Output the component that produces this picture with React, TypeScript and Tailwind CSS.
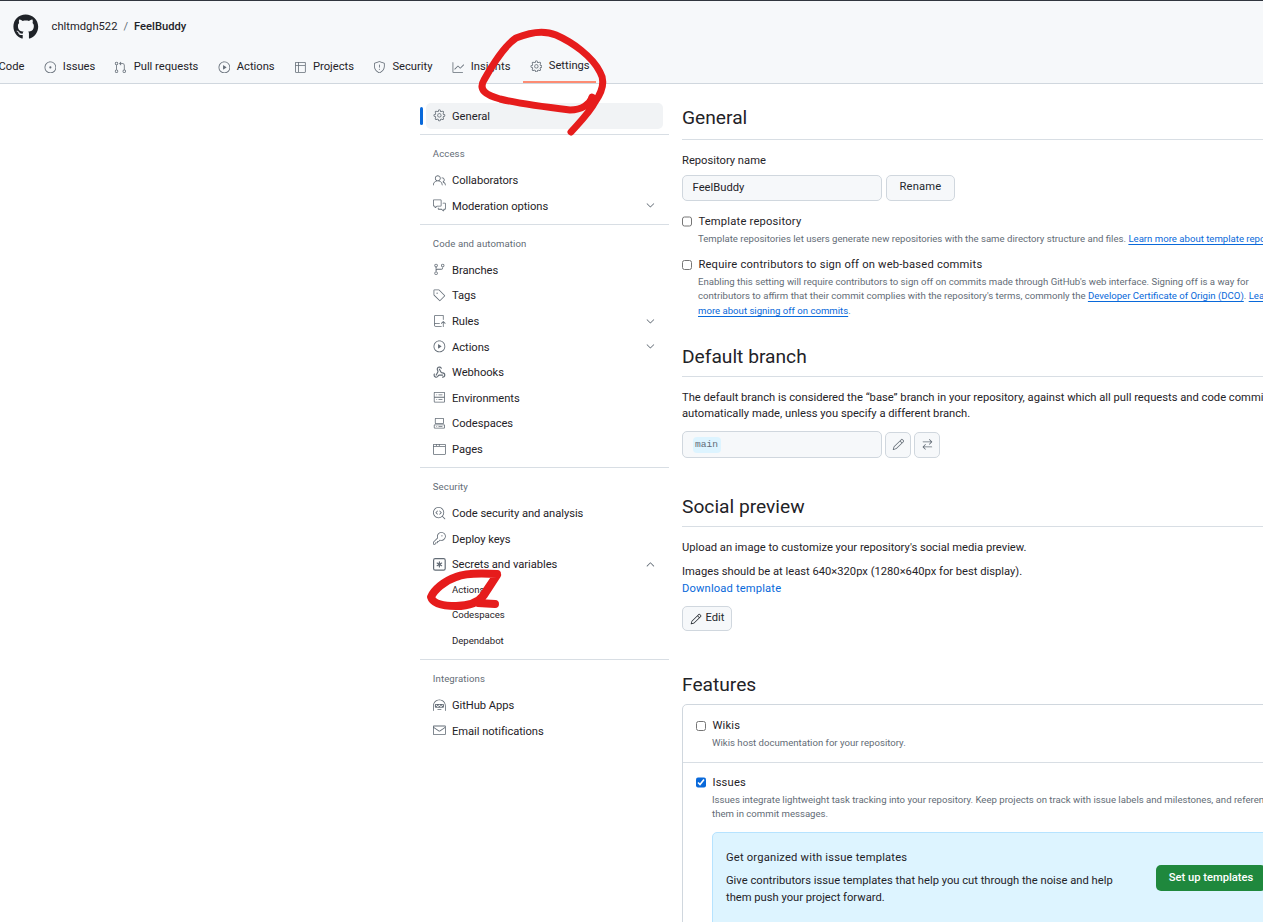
import React from 'react';
import type { ComponentType } from 'react';
import { Webhook } from 'lucide-react';
import { FaGithub } from 'react-icons/fa';
import {
  GoArrowSwitch, GoBrowser, GoChevronDown, GoChevronUp, GoCode, GoCodescan, GoCodespaces, GoCommentDiscussion,
  GoGear, GoGitBranch, GoGitPullRequest, GoGraph, GoHubot, GoIssueOpened, GoKey, GoMail,
  GoPencil, GoPeople, GoPlay, GoRepoPush, GoServer, GoShield, GoTable, GoTag,
} from 'react-icons/go';

type Icon = ComponentType<{ size?: number; className?: string }>;

function KeyAsterisk({ size }: { size?: number }) {
  return (
    <svg width={size} height={size} viewBox="0 0 16 16" fill="currentColor">
      <path d="M0 2.75A2.75 2.75 0 0 1 2.75 0h10.5A2.75 2.75 0 0 1 16 2.75v10.5A2.75 2.75 0 0 1 13.25 16H2.75A2.75 2.75 0 0 1 0 13.25ZM2.75 1.5c-.69 0-1.25.56-1.25 1.25v10.5c0 .69.56 1.25 1.25 1.25h10.5c.69 0 1.25-.56 1.25-1.25V2.75c0-.69-.56-1.25-1.25-1.25Z" />
      <path d="M8 4a.75.75 0 0 1 .75.75V6.7l1.69-.975a.75.75 0 0 1 .75 1.3L9.5 8l1.69.976a.75.75 0 0 1-.75 1.298L8.75 9.299v1.951a.75.75 0 0 1-1.5 0V9.299l-1.69.975a.75.75 0 0 1-.75-1.298L6.5 8l-1.69-.975a.75.75 0 0 1 .75-1.3l1.69.976V4.75A.75.75 0 0 1 8 4Z" />
    </svg>
  );
}

function WebhookIcon({ size }: { size?: number }) {
  return <Webhook size={size} strokeWidth={2.2} />;
}

const TABS: { label: string; icon: Icon }[] = [
  { label: 'Code', icon: GoCode },
  { label: 'Issues', icon: GoIssueOpened },
  { label: 'Pull requests', icon: GoGitPullRequest },
  { label: 'Actions', icon: GoPlay },
  { label: 'Projects', icon: GoTable },
  { label: 'Security', icon: GoShield },
  { label: 'Insights', icon: GoGraph },
  { label: 'Settings', icon: GoGear },
];

type NavItem = { label: string; icon?: Icon; chevron?: 'up' | 'down'; sub?: boolean };

const NAV: { title: string; items: NavItem[] }[] = [
  {
    title: 'Access',
    items: [
      { label: 'Collaborators', icon: GoPeople },
      { label: 'Moderation options', icon: GoCommentDiscussion, chevron: 'down' },
    ],
  },
  {
    title: 'Code and automation',
    items: [
      { label: 'Branches', icon: GoGitBranch },
      { label: 'Tags', icon: GoTag },
      { label: 'Rules', icon: GoRepoPush, chevron: 'down' },
      { label: 'Actions', icon: GoPlay, chevron: 'down' },
      { label: 'Webhooks', icon: WebhookIcon },
      { label: 'Environments', icon: GoServer },
      { label: 'Codespaces', icon: GoCodespaces },
      { label: 'Pages', icon: GoBrowser },
    ],
  },
  {
    title: 'Security',
    items: [
      { label: 'Code security and analysis', icon: GoCodescan },
      { label: 'Deploy keys', icon: GoKey },
      { label: 'Secrets and variables', icon: KeyAsterisk, chevron: 'up' },
      { label: 'Actions', sub: true },
      { label: 'Codespaces', sub: true },
      { label: 'Dependabot', sub: true },
    ],
  },
  {
    title: 'Integrations',
    items: [
      { label: 'GitHub Apps', icon: GoHubot },
      { label: 'Email notifications', icon: GoMail },
    ],
  },
];

function NavRow({ item }: { item: NavItem }) {
  const ItemIcon = item.icon;
  return (
    <div className="mx-[6.4px] h-[25.6px] pl-[6.4px] pr-[5.4px] flex items-center gap-[6.4px] rounded-[5px]">
      <span className="w-[12.8px] shrink-0 text-[#636c76]">{ItemIcon && <ItemIcon size={12.8} />}</span>
      <span className={item.sub ? 'flex-1 text-[9.6px] text-[#1f2328]' : 'flex-1 pt-[3px] text-[11.2px] tracking-[-0.05px] text-[#1f2328]'}>{item.label}</span>
      {item.chevron === 'down' && <GoChevronDown size={12.8} className="text-[#636c76]" />}
      {item.chevron === 'up' && <GoChevronUp size={12.8} className="text-[#636c76]" />}
    </div>
  );
}

function Sidebar() {
  return (
    <aside className="w-[249px] shrink-0">
      <div className="relative mx-[6.4px] h-[25.6px] px-[6.4px] flex items-center gap-[6.4px] rounded-[5px] bg-[#f1f3f5]">
        <span className="absolute -left-[6.4px] top-[4px] w-[3px] h-[18px] rounded-[2px] bg-[#0969da]" />
        <GoGear size={12.8} className="text-[#636c76]" />
        <span className="pt-[3px] text-[11.2px] text-[#1f2328]">General</span>
      </div>
      {NAV.map(group => (
        <div key={group.title} className="mt-[5.6px] border-t border-[#d8dee4]">
          <h3 className="h-[32px] pl-[12.8px] pt-[13px] text-[9.6px] leading-[12px] font-normal tracking-[0.1px] text-[#636c76]">{group.title}</h3>
          {group.items.map(item => <NavRow key={group.title + item.label} item={item} />)}
        </div>
      ))}
    </aside>
  );
}

function SectionHead({ children, first }: { children: React.ReactNode; first?: boolean }) {
  return (
    <h2 className={first ? 'h-[34px] border-b border-[#d8dee4] text-[19.2px] leading-[24px] font-normal text-[#1f2328]' : 'h-[32px] border-b border-[#d8dee4] text-[19.2px] leading-[24px] font-normal text-[#1f2328]'}>{children}</h2>
  );
}

function Link({ children }: { children: React.ReactNode }) {
  return <a className="text-[#0969da] underline underline-offset-2">{children}</a>;
}

function CheckRow({ title, checked, children, className }: { title: string; checked?: boolean; children: React.ReactNode; className?: string }) {
  return (
    <div className={className}>
      <div className="flex items-center gap-[6px]">
        <input type="checkbox" defaultChecked={checked} className="w-[10.4px] h-[10.4px] m-0 accent-[#0969da]" />
        <span className="text-[11.2px] leading-[14px] tracking-[0.2px] text-[#1f2328]">{title}</span>
      </div>
      <p className="mt-[3px] ml-[16px] text-[9.6px] leading-[14.4px] text-[#636c76] whitespace-nowrap">{children}</p>
    </div>
  );
}

function Main() {
  return (
    <main className="ml-[13px] w-[800px] shrink-0 pt-[3px]">
      <SectionHead first>General</SectionHead>
      <label className="block mt-[14px] text-[11.2px] leading-[14px] text-[#1f2328]">Repository name</label>
      <div className="mt-[7px] flex gap-[4px]">
        <div className="w-[200px] h-[25.6px] px-[9.6px] pt-[1px] flex items-center rounded-[5px] border border-[#d0d7de] bg-[#f6f8fa] text-[11.2px] text-[#1f2328]">FeelBuddy</div>
        <button className="w-[69px] h-[25.6px] rounded-[5px] border border-[#d0d7de] bg-[#f6f8fa] text-[11.2px] tracking-[0.2px] text-[#24292f]">Rename</button>
      </div>
      <CheckRow title="Template repository" className="mt-[14px]">
        Template repositories let users generate new repositories with the same directory structure and files. <Link>Learn more about template repositories.</Link>
      </CheckRow>
      <CheckRow title="Require contributors to sign off on web-based commits" className="mt-[12px]">
        Enabling this setting will require contributors to sign off on commits made through GitHub's web interface. Signing off is a way for<br />
        contributors to affirm that their commit complies with the repository's terms, commonly the <Link>Developer Certificate of Origin (DCO)</Link>. <Link>Learn</Link><br />
        <Link>more about signing off on commits</Link>.
      </CheckRow>

      <div className="mt-[27px]">
        <SectionHead>Default branch</SectionHead>
        <p className="mt-[13px] text-[11.2px] leading-[16px] text-[#1f2328] whitespace-nowrap">
          The default branch is considered the “base” branch in your repository, against which all pull requests and code commits are<br />
          automatically made, unless you specify a different branch.
        </p>
        <div className="mt-[9px] flex items-center gap-[3px]">
          <div className="w-[200px] h-[27px] px-[9.6px] flex items-center rounded-[5px] border border-[#d0d7de] bg-[#f6f8fa]">
            <span className="px-[2.5px] py-[1px] rounded-[4px] bg-[#ddf4ff] font-['Liberation_Mono',monospace] text-[9.6px] text-[#636c76]">main</span>
          </div>
          <button className="w-[26px] h-[26px] flex items-center justify-center rounded-[5px] border border-[#d0d7de] bg-[#f6f8fa] text-[#636c76]"><GoPencil size={12.8} /></button>
          <button className="w-[26px] h-[26px] flex items-center justify-center rounded-[5px] border border-[#d0d7de] bg-[#f6f8fa] text-[#636c76]"><GoArrowSwitch size={12.8} /></button>
        </div>
      </div>

      <div className="mt-[37px]">
        <SectionHead>Social preview</SectionHead>
        <p className="mt-[13px] text-[11.2px] leading-[16px] text-[#1f2328]">Upload an image to customize your repository's social media preview.</p>
        <p className="mt-[8px] text-[11.2px] leading-[16px] text-[#1f2328]">Images should be at least 640×320px (1280×640px for best display).</p>
        <a className="block mt-[1px] text-[11.2px] leading-[16px] tracking-[0.15px] text-[#0969da]">Download template</a>
        <button className="mt-[9px] h-[25px] w-[50px] flex items-center justify-center gap-[4px] rounded-[5px] border border-[#d0d7de] bg-[#f6f8fa] text-[11.2px] text-[#24292f]">
          <GoPencil size={12} className="text-[#24292f]" />Edit
        </button>
      </div>

      <div className="mt-[42px]">
        <h2 className="text-[19.2px] leading-[24px] font-normal text-[#1f2328]">Features</h2>
        <div className="mt-[7px] rounded-t-[5px] border border-[#d0d7de]">
          <CheckRow title="Wikis" className="px-[13px] pt-[14px] pb-[11px]">Wikis host documentation for your repository.</CheckRow>
          <div className="border-t border-[#d8dee4] px-[13px] pt-[13px]">
            <CheckRow title="Issues" checked>
              Issues integrate lightweight task tracking into your repository. Keep projects on track with issue labels and milestones, and reference<br />
              them in commit messages.
            </CheckRow>
            <div className="mt-[11px] ml-[16px] h-[120px] rounded-[5px] border border-[#b6e3ff] bg-[#ddf4ff] pl-[13px] pt-[18px] flex items-start">
              <div className="w-[430px] shrink-0">
                <h4 className="text-[11.2px] leading-[14px] tracking-[0.2px] text-[#1f2328]">Get organized with issue templates</h4>
                <p className="mt-[7px] text-[11.2px] leading-[17px] text-[#1f2328]">Give contributors issue templates that help you cut through the noise and help<br />them push your project forward.</p>
              </div>
              <button className="mt-[14px] h-[26px] w-[110px] rounded-[5px] bg-[#1f883d] text-[11.2px] font-medium text-white">Set up templates</button>
            </div>
          </div>
        </div>
      </div>
    </main>
  );
}

export default function App() {
  return (
    <div className="relative w-[1263px] h-[922px] overflow-hidden bg-white font-['Roboto','Noto_Sans',sans-serif]">
      <header className="h-[84px] border-t border-[#31363f] border-b border-b-[#d0d7de] bg-[#f6f8fa]">
        <div className="h-[52px] pl-[13px] flex items-center">
          <FaGithub size={25.6} className="text-[#1f2328]" />
          <span className="ml-[13px] text-[11.2px] text-[#1f2328]">chltmdgh522</span>
          <span className="mx-[6px] text-[11.2px] text-[#636c76]">/</span>
          <span className="text-[11.2px] font-medium text-[#1f2328]">FeelBuddy</span>
        </div>
        <nav className="-ml-[27px] -mt-[2px] h-[32px] flex gap-[6.4px]">
          {TABS.map(tab => {
            const TabIcon = tab.icon;
            return (
              <div key={tab.label} className={tab.label === 'Settings' ? 'h-[32px] px-[6.4px] flex items-center gap-[6.4px] border-b-2 border-[#fd8c73]' : 'h-[32px] px-[6.4px] flex items-center gap-[6.4px]'}>
                <TabIcon size={12.8} className="text-[#636c76]" />
                <span className="text-[11.2px] text-[#1f2328]">{tab.label}</span>
              </div>
            );
          })}
        </nav>
      </header>

      <div className="flex pl-[420px] pt-[19px]">
        <Sidebar />
        <Main />
      </div>

      {/* marker scribbles from whoever annotated the screenshot */}
      <svg className="absolute inset-0 pointer-events-none" width={1263} height={922} fill="none" stroke="#e61c1c" strokeLinecap="round" strokeLinejoin="round">
        <path strokeWidth={7} d="M571 132 C580 122 590 112 595 102 C602 92 606 82 600 72 C592 56 572 42 556 35 C542 29 528 33 516 38 C504 46 494 62 484 80 C478 90 486 95 500 99 C520 104 545 107 570 110 C582 110 590 104 592 97" />
        <path strokeWidth={8} d="M497 574 C480 573 465 573 456 577 C444 581 434 590 431 597 C433 604 444 606 456 606 C468 606 478 603 484 595 L497 575 L478 603 L495 604" />
      </svg>
    </div>
  );
}
